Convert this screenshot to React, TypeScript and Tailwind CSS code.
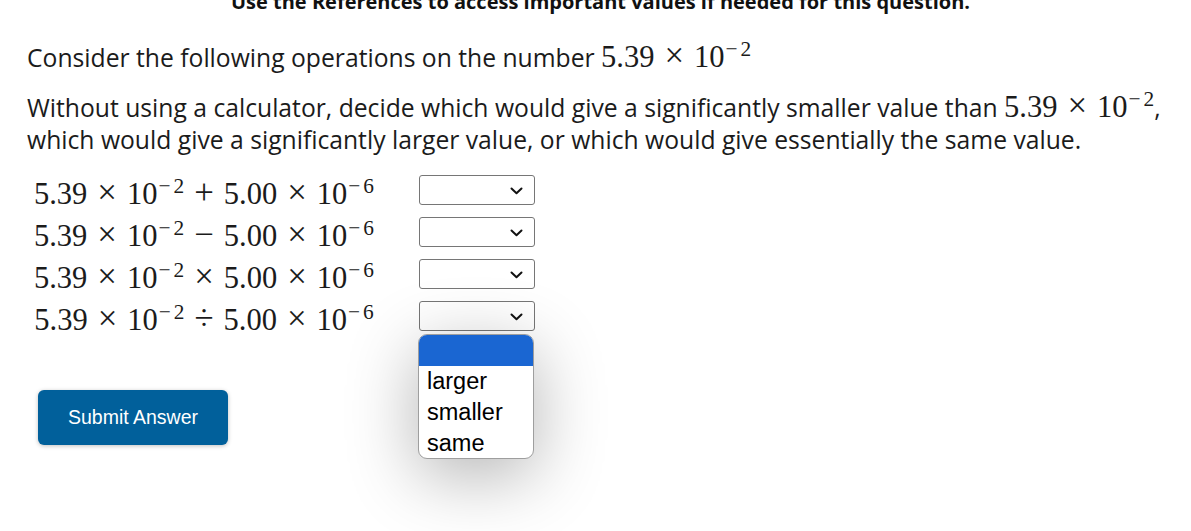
import React from "react";

const mathFont = { fontFamily: '"Liberation Serif", "DejaVu Serif", serif' };

function Op({ c }: { c: string }) {
  return <span className="inline-block text-[1.14em] leading-none mx-[10px]">{c}</span>;
}

function Sci({ m, e }: { m: string; e: string }) {
  return (
    <span className="whitespace-nowrap">
      {m}
      <Op c="×" />
      10
      <sup className="text-[0.7em] ml-[1px]">
        <span className="mr-[3px]">−</span>
        {e}
      </sup>
    </span>
  );
}

function Chevron() {
  return (
    <svg width="13" height="8" viewBox="0 0 13 8" className="absolute right-[11px] top-[11px]">
      <path d="M1.5 1.5 L6.5 6.2 L11.5 1.5" fill="none" stroke="#111" strokeWidth="2" strokeLinecap="round" strokeLinejoin="round" />
    </svg>
  );
}

function FakeSelect() {
  return (
    <div className="relative w-[116px] h-[30px] border border-[#767676] rounded-[3px] bg-white">
      <Chevron />
    </div>
  );
}

const ops = ["+", "−", "×", "÷"];

export default function App() {
  return (
    <div className="relative w-[1191px] h-[531px] overflow-hidden bg-white text-[#1b1b1b]" style={{ fontFamily: '"Open Sans", "Noto Sans", sans-serif' }}>
      <div className="-mt-[10px] h-[24px] text-center text-[20px] font-bold leading-[24px] text-[#111] pl-[10px]">
        Use the References to access important values if needed for this question.
      </div>
      <div className="pl-[27px]">
        <p className="mt-[25px] text-[24.7px] leading-[32px]">
          Consider the following operations on the number{" "}
          <span className="text-[30.5px]" style={mathFont}>
            <Sci m="5.39" e="2" />
          </span>
        </p>
        <p className="mt-[15px] text-[24.7px] leading-[32px]">
          Without using a calculator, decide which would give a significantly smaller value than{" "}
          <span className="text-[30.5px]" style={mathFont}>
            <Sci m="5.39" e="2" />
          </span>
          ,
          <br />
          which would give a significantly larger value, or which would give essentially the same value.
        </p>
      </div>
      <div className="mt-[19px] flex flex-col gap-[12px]">
        {ops.map((op, i) => (
          <div key={i} className="flex items-center h-[30px]">
            <div className="w-[396px] pl-[12px] pt-[6px] text-center text-[30.5px] leading-[30px] whitespace-nowrap" style={mathFont}>
              <Sci m="5.39" e="2" />
              <Op c={op} />
              <Sci m="5.00" e="6" />
            </div>
            <div className="ml-[23px]">
              <FakeSelect />
            </div>
          </div>
        ))}
      </div>
      <div className="mt-[59px] ml-[38px]">
        <button className="w-[190px] h-[55px] rounded-[6px] bg-[#01609b] text-white text-[19.5px] shadow-[0_1px_4px_rgba(0,0,0,0.25)]" style={{ fontFamily: '"Liberation Sans", Arial, sans-serif' }}>
          Submit Answer
        </button>
      </div>
      <div
        className="absolute left-[418px] top-[334px] w-[116px] h-[125px] rounded-[9px] border-[1.5px] border-[#9e9e9e] bg-white overflow-hidden shadow-[0_16px_70px_rgba(0,0,0,0.3)]"
        style={{ fontFamily: '"Liberation Sans", Arial, sans-serif' }}
      >
        <div className="h-[31px] bg-[#1a66d2]" />
        <div className="text-[23.5px] leading-[31px] pl-[8px] text-black">
          <div>larger</div>
          <div>smaller</div>
          <div>same</div>
        </div>
      </div>
    </div>
  );
}
